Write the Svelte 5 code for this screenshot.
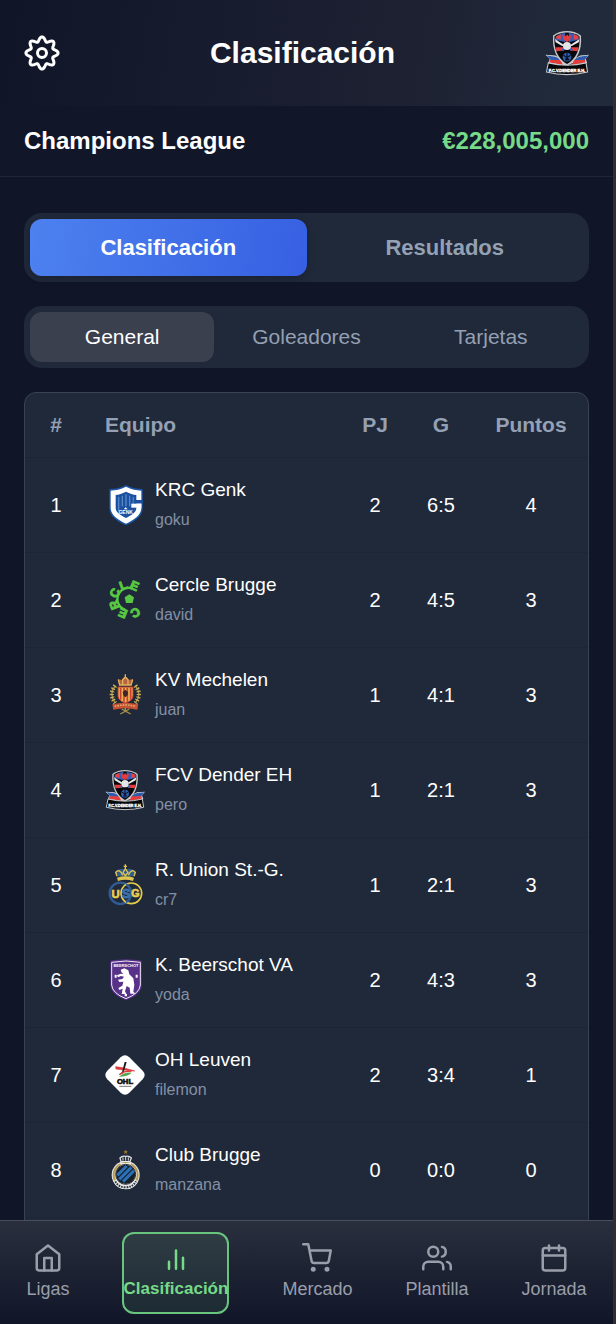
<script>
  const teams = [
    { crest: 'genk', name: 'KRC Genk', user: 'goku', played: 2, goals: '6:5', points: 4 },
    { crest: 'cercle', name: 'Cercle Brugge', user: 'david', played: 2, goals: '4:5', points: 3 },
    { crest: 'mechelen', name: 'KV Mechelen', user: 'juan', played: 1, goals: '4:1', points: 3 },
    { crest: 'dender', name: 'FCV Dender EH', user: 'pero', played: 1, goals: '2:1', points: 3 },
    { crest: 'union', name: 'R. Union St.-G.', user: 'cr7', played: 1, goals: '2:1', points: 3 },
    { crest: 'beerschot', name: 'K. Beerschot VA', user: 'yoda', played: 2, goals: '4:3', points: 3 },
    { crest: 'leuven', name: 'OH Leuven', user: 'filemon', played: 2, goals: '3:4', points: 1 },
    { crest: 'brugge', name: 'Club Brugge', user: 'manzana', played: 0, goals: '0:0', points: 0 }
  ];

  const sections = ['Clasificación', 'Resultados'];
  const views = ['General', 'Goleadores', 'Tarjetas'];
  const links = [
    { id: 'home', label: 'Ligas' },
    { id: 'chart', label: 'Clasificación' },
    { id: 'cart', label: 'Mercado' },
    { id: 'users', label: 'Plantilla' },
    { id: 'calendar', label: 'Jornada' }
  ];

  let section = $state('Clasificación');
  let view = $state('General');
  let page = $state('chart');

  // Eight-lobed outline of the settings gear, in a 36-unit box.
  const gear =
    Array.from({ length: 144 }, (_, i) => {
      const a = (i * Math.PI) / 72;
      const r = 13.9 + 2.2 * Math.cos(8 * a);
      return `${i ? 'L' : 'M'}${(18 + r * Math.cos(a)).toFixed(2)} ${(18 + r * Math.sin(a)).toFixed(2)}`;
    }).join('') + 'Z';

  const ringLetters = [
    ['C', 62], ['E', 112], ['R', 158], ['C', 205], ['L', 250], ['E', 294]
  ];
</script>

{#snippet crest(id)}
  <svg class="crest" viewBox="0 0 120 120" aria-hidden="true">
    {#if id === 'genk'}
      <path d="M63 0C80 9 97 12 113 12V70C113 94 90 110 63 121C36 110 13 94 13 70V12C29 12 46 9 63 0Z" fill="#1c55a5" />
      <path d="M63 5C79 13 94 16 109 17V70C109 89 88 105 63 116C38 105 17 89 17 70V17C32 16 47 13 63 5Z" fill="#fff" />
      <path d="M63 20C75 26 84 29 94 30V70C94 81 80 91 63 99C46 91 32 81 32 70V30C42 29 51 26 63 20Z" fill="#1b51a0" />
      <path d="M41 36V78M52 32V64M63 28V64M74 32V64M85 36V58" stroke="#5587c5" stroke-width="4" />
      <path d="M86 45H113V56H86Z" fill="#1b51a0" />
      <path d="M79 56H109V68H79Z" fill="#fff" />
      <path d="M56 73L62 67L68 73Z" fill="#fff" />
      <text x="62" y="86" class="ct" font-size="15" fill="#fff">GENK</text>
    {:else if id === 'cercle'}
      <path d="M62 90A34 34 0 0 1 42 40A34 34 0 0 1 82 25" fill="none" stroke="#58c843" stroke-width="7" />
      {#each ringLetters as [letter, angle]}
        <text transform="translate(70 58) rotate({angle + 90})" y="-32" class="ct" font-size="37" fill="#58c843" stroke="#58c843" stroke-width="3">{letter}</text>
      {/each}
      <path d="M73 43L87 52L83 69H63L59 52Z" fill="#58c843" />
    {:else if id === 'mechelen'}
      <path d="M43 30L39 12L50 15L61 3L72 15L84 12L80 30Z" fill="#b86442" />
      <path d="M44 30L40 14M78 30L83 14M53 28V14L61 6L69 14V28M61 -2V8M42 30H80" stroke="#e0b45c" stroke-width="4" fill="none" />
      <path d="M39 36H84V63Q84 77 61 84Q39 77 39 63Z" fill="#e6b453" stroke="#b83a2c" stroke-width="3" />
      <path d="M47 38V74M57 38V80M67 38V80M77 38V74" stroke="#c94231" stroke-width="5" />
      <path d="M61 44L53 51L55 61L61 67L68 61L69 51Z" fill="#43242b" />
      <path d="M31 32Q10 57 31 84M91 32Q112 57 91 84" fill="none" stroke="#a99048" stroke-width="4" />
      <path d="M31 32Q10 57 31 84M91 32Q112 57 91 84" fill="none" stroke="#c7ac59" stroke-width="13" stroke-dasharray="4 5" />
      <path d="M22 88Q61 78 100 88L97 104Q61 95 25 104Z" fill="#c65335" />
      <path d="M29 94Q61 86 93 94" fill="none" stroke="#e3b572" stroke-width="4" stroke-dasharray="5 3" />
      <path d="M46 117L73 102M50 102L77 117M61 98V112" stroke="#a99048" stroke-width="4" />
    {:else if id === 'dender'}
      <path d="M1 65L28 67L63 85L96 67L120 65L111 76L115 87L74 88L52 96L9 87L13 76Z" fill="#d3d8df" />
      <path d="M5 67L28 70L55 82L16 80Z" fill="#315bad" />
      <path d="M117 67L94 70L69 82L108 80Z" fill="#315bad" />
      <path d="M13 79L43 79L49 93L12 86ZM109 79L79 79L73 93L111 86Z" fill="#e43c3b" />
      <path d="M60 0Q81 0 98 12Q103 71 60 95Q18 71 22 12Q39 0 60 0Z" fill="#c8c8ca" />
      <path d="M60 4Q80 4 94 14Q98 67 60 90Q22 67 26 14Q40 4 60 4Z" fill="#07080b" />
      <path d="M29 15Q43 6 55 5L56 31L28 24ZM65 5Q82 7 92 15L91 24L65 31Z" fill="#335fbc" />
      <path d="M31 14L43 9V24L30 20ZM79 9L91 14V22L79 24Z" fill="#ec413e" />
      <path d="M47 10L57 14L60 9L65 14L72 11L69 24L60 31L51 24Z" fill="#e43b3e" />
      <path d="M28 27L47 36L55 44L48 46L29 38ZM92 27L73 36L65 44L72 46L91 38Z" fill="#07080b" />
      <path d="M27 22L55 40L47 41L29 31ZM94 22L66 40L73 41L92 31Z" fill="#e8e9eb" />
      <path d="M29 44L49 44L52 53L31 55ZM91 44L71 44L68 53L89 55Z" fill="#e43d3c" />
      <path d="M47 53L54 46H67L74 53" stroke="#335fbc" stroke-width="6" fill="none" />
      <circle cx="60" cy="41" r="11" fill="#e3e5e8" />
      <circle cx="60" cy="71" r="12" fill="#315dae" />
      <path d="M60 60V82M50 66L60 72L70 66M55 80L60 72L66 80" stroke="#091122" stroke-width="3" fill="none" />
      <path d="M9 87Q60 100 112 87L116 112Q60 126 4 112Z" fill="#050608" stroke="#c6c7c9" stroke-width="3" />
      <text x="60" y="111" class="ct" font-size="11" fill="#fff" stroke="#fff" stroke-width="1">F.C.V.DENDER E.H.</text>
    {:else if id === 'union'}
      <path d="M36 34L31 20Q43 7 61 13Q79 7 92 20L87 34Z" fill="#315b91" />
      <path d="M61 -2V12M56 4H66M36 34L32 22Q43 9 53 31M87 34L91 22Q80 9 70 31M61 11L54 23L61 32L69 23Z" fill="none" stroke="#ddc650" stroke-width="4" />
      <path d="M36 38Q61 30 87 38L84 48Q61 41 39 48Z" fill="#ddc650" />
      <circle cx="46" cy="85" r="32" fill="none" stroke="#315b91" stroke-width="7" />
      <circle cx="79" cy="85" r="31" fill="none" stroke="#e1cc4a" stroke-width="5" />
      <path d="M63 57A32 32 0 0 1 63 112" fill="none" stroke="#315b91" stroke-width="6" />
      <text x="32" y="98" class="ct" font-size="34" fill="#e6d155" stroke="#e6d155" stroke-width="2">U</text>
      <text x="63" y="99" class="ct" font-size="38" fill="#3c70ab" stroke="#3c70ab" stroke-width="3">S</text>
      <text x="91" y="97" class="ct" font-size="32" fill="#e6d155" stroke="#e6d155" stroke-width="2">G</text>
    {:else if id === 'beerschot'}
      <path d="M16 2Q63 -7 110 2V76Q108 105 63 121Q18 105 16 76Z" fill="#57318a" />
      <path d="M20 7Q63 -1 106 7V75Q104 100 63 116Q22 100 20 75Z" fill="#57318a" stroke="#eee9f3" stroke-width="3" />
      <text x="63" y="21" class="ct" font-size="12" fill="#fff">BEERSCHOT</text>
      <path d="M47 29L58 25L70 31L73 43L85 55L88 75L85 95L91 101H76L74 83L65 78L60 94L64 102H50L53 86L43 90L40 84L52 77L55 65L43 66L39 59L52 57L57 50L48 48L39 52L36 46L47 41L55 42L49 36Z" fill="#fff" />
      <path d="M29 44H35V53H29ZM92 44H98V53H92ZM59 102H66V109H59Z" fill="#fff" />
    {:else if id === 'leuven'}
      <path d="M47 7Q60 -5 73 7L113 47Q125 60 113 73L73 113Q60 125 47 113L7 73Q-5 60 7 47Z" fill="#fff" />
      <path d="M32 35Q57 37 89 48Q65 46 33 42Z" fill="#df363b" stroke="#df363b" stroke-width="2" />
      <path d="M65 21L59 21L51 52L43 58L55 55Z" fill="#171819" />
      <path d="M43 59Q55 48 80 48" fill="none" stroke="#df363b" stroke-width="4" />
      <path d="M42 65Q60 50 80 53Q69 65 42 65Z" fill="#55a84f" />
      <text x="60" y="88" class="ct" font-size="23" fill="#111" stroke="#111" stroke-width="2">OHL</text>
      <path d="M43 94H79" stroke="#777" stroke-width="3" />
    {:else}
      <path d="M62 -1L64 4H69L65 7L67 12L62 9L57 12L59 7L55 4H60Z" fill="#a87a2c" />
      <path d="M48 35L45 24Q51 17 62 19Q73 17 79 24L75 35Z" fill="#232a35" stroke="#dce0e3" stroke-width="4" />
      <path d="M54 22V32M62 18V32M70 22V32" stroke="#dce0e3" stroke-width="3" />
      <circle cx="62" cy="75" r="42" fill="#e9eaeb" />
      <circle cx="62" cy="75" r="36" fill="none" stroke="#b89b53" stroke-width="6" />
      <path d="M45 39H79L76 46H48Z" fill="#e9eaeb" />
      <path d="M30 91Q39 112 62 112Q84 112 94 91" fill="none" stroke="#e9eaeb" stroke-width="12" />
      <path d="M31 94Q40 112 62 112Q83 112 93 94" fill="none" stroke="#30363e" stroke-width="6" stroke-dasharray="5 3" />
      <circle cx="62" cy="73" r="29" fill="#1a2028" />
      <path d="M37 76L65 48M43 88L79 52M54 95L87 62" stroke="#2a70b8" stroke-width="9" />
      <circle cx="62" cy="73" r="30" fill="none" stroke="#232b33" stroke-width="3" />
    {/if}
  </svg>
{/snippet}

{#snippet icon(id)}
  <svg class="icon" viewBox="0 0 24 24" aria-hidden="true">
    {#if id === 'home'}
      <path d="M3 9l9-7 9 7v11a2 2 0 0 1-2 2H5a2 2 0 0 1-2-2z" />
      <path d="M9 22V12h6v10" />
    {:else if id === 'chart'}
      <path d="M17.6 20.6V11.8M12 20.6V6M6.4 20.6v-5.6" />
    {:else if id === 'cart'}
      <circle cx="9" cy="21" r="1" />
      <circle cx="20" cy="21" r="1" />
      <path d="M1 1h4l2.68 13.39a2 2 0 0 0 2 1.61h9.72a2 2 0 0 0 2-1.61L23 6H6" />
    {:else if id === 'users'}
      <path d="M17 21v-2a4 4 0 0 0-4-4H5a4 4 0 0 0-4 4v2" />
      <circle cx="9" cy="7" r="4" />
      <path d="M23 21v-2a4 4 0 0 0-3-3.87M16 3.13a4 4 0 0 1 0 7.75" />
    {:else}
      <rect x="3" y="4" width="18" height="18" rx="2" />
      <path d="M16 2v4M8 2v4M3 10h18" />
    {/if}
  </svg>
{/snippet}

<div class="app">
  <header class="top">
    <button class="plain" aria-label="Ajustes">
      <svg class="gear" viewBox="0 0 36 36" aria-hidden="true">
        <path d={gear} />
        <circle cx="18" cy="18" r="4.5" />
      </svg>
    </button>
    <h1>Clasificación</h1>
    <button class="plain badge" aria-label="Mi equipo">{@render crest('dender')}</button>
  </header>

  <div class="league">
    <h2>Champions League</h2>
    <span class="money">€228,005,000</span>
  </div>

  <main>
    <div class="tabs primary">
      {#each sections as name}
        <button class:on={section === name} aria-pressed={section === name} onclick={() => (section = name)}>{name}</button>
      {/each}
    </div>
    <div class="tabs secondary">
      {#each views as name}
        <button class:on={view === name} aria-pressed={view === name} onclick={() => (view = name)}>{name}</button>
      {/each}
    </div>

    <div class="card">
      <table>
        <thead>
          <tr>
            <th class="rank">#</th>
            <th class="team">Equipo</th>
            <th class="num">PJ</th>
            <th class="num">G</th>
            <th class="points">Puntos</th>
          </tr>
        </thead>
        <tbody>
          {#each teams as team, i}
            <tr>
              <td>{i + 1}</td>
              <td class="team">
                <div class="club">
                  {@render crest(team.crest)}
                  <div class="names">
                    <span class="name">{team.name}</span>
                    <span class="user">{team.user}</span>
                  </div>
                </div>
              </td>
              <td>{team.played}</td>
              <td>{team.goals}</td>
              <td>{team.points}</td>
            </tr>
          {/each}
        </tbody>
      </table>
    </div>
  </main>

  <nav>
    {#each links as link}
      <button class="link" class:on={page === link.id} onclick={() => (page = link.id)}>
        {@render icon(link.id)}
        <span>{link.label}</span>
      </button>
    {/each}
  </nav>
</div>

<style>
  :global(body) {
    background: #101528;
  }
  .app {
    box-sizing: border-box;
    height: 100vh;
    display: flex;
    flex-direction: column;
    border-right: 3px solid #302f2f;
    background: #101528;
    color: #fff;
    font-family: 'Liberation Sans', Arial, sans-serif;
  }
  button {
    font: inherit;
    color: inherit;
    background: none;
    border: 0;
    padding: 0;
    cursor: pointer;
  }
  .plain {
    display: flex;
  }
  h1,
  h2 {
    margin: 0;
    font-weight: 700;
  }
  .top {
    flex: none;
    display: flex;
    align-items: center;
    justify-content: space-between;
    padding: 31px 24px;
    background: linear-gradient(100deg, #101528, #1e2233 70%, #202a3a 90%);
  }
  h1 {
    font-size: 30px;
    line-height: 44px;
  }
  .gear {
    width: 36px;
    height: 36px;
    fill: none;
    stroke: #fff;
    stroke-width: 3;
    stroke-linejoin: round;
  }
  .crest {
    display: block;
    flex: none;
    width: 40px;
    height: 40px;
    overflow: visible;
  }
  .badge .crest {
    width: 44px;
    height: 44px;
  }
  .ct {
    font-family: 'Liberation Sans', Arial, sans-serif;
    font-weight: 700;
    text-anchor: middle;
  }
  .league {
    flex: none;
    display: flex;
    align-items: center;
    justify-content: space-between;
    padding: 21px 24px;
    border-bottom: 1px solid #1d2536;
    background: #111629;
    font-size: 24px;
    line-height: 28px;
  }
  h2 {
    font-size: 24px;
  }
  .money {
    color: #76da88;
    font-weight: 700;
  }
  main {
    flex: 1;
    min-height: 0;
    overflow-y: auto;
    scrollbar-width: none;
    display: flex;
    flex-direction: column;
    gap: 24px;
    padding: 36px 24px 0;
  }
  .tabs {
    flex: none;
    display: flex;
    padding: 6px;
    border-radius: 18px;
    background: #202939;
    color: #94a0b4;
  }
  .tabs button {
    flex: 1 1 0;
    border-radius: 12px;
  }
  .primary button {
    padding: 16px 0;
    font-size: 22px;
    line-height: 25px;
    font-weight: 700;
  }
  .primary .on {
    background: linear-gradient(100deg, #4d81ef, #3660e2);
    box-shadow: 0 2px 6px rgba(16, 21, 40, 0.4);
    color: #fff;
  }
  .secondary button {
    padding: 13px 0;
    font-size: 21px;
    line-height: 24px;
  }
  .secondary .on {
    background: #3b404f;
    color: #fff;
  }
  .card {
    flex: none;
    padding-bottom: 24px;
    border: 1px solid #384253;
    border-radius: 12px;
    background: #202939;
  }
  table {
    width: 100%;
    table-layout: fixed;
    border-collapse: collapse;
    font-size: 20px;
    line-height: 24px;
    text-align: center;
  }
  th,
  td {
    padding: 0;
    border-bottom: 1px solid #1d2535;
  }
  th {
    height: 64px;
    font-size: 21px;
    color: #94a0b4;
  }
  td {
    height: 94px;
  }
  .rank {
    width: 62px;
  }
  .num {
    width: 66px;
  }
  .points {
    width: 114px;
  }
  .team {
    padding-left: 18px;
    text-align: left;
  }
  .club {
    display: flex;
    align-items: center;
    gap: 10px;
  }
  .names {
    display: flex;
    flex-direction: column;
    gap: 6px;
  }
  .name {
    font-size: 19px;
    line-height: 24px;
  }
  .user {
    color: #8390a5;
    font-size: 16px;
    line-height: 24px;
  }
  nav {
    flex: none;
    display: flex;
    justify-content: space-around;
    padding: 11px 0 10px;
    border-top: 1px solid #494e5d;
    background: linear-gradient(#2a2f3e, #101528);
    color: #9a9eaa;
  }
  .link {
    display: flex;
    flex-direction: column;
    align-items: center;
    gap: 5px;
    padding: 9px 0 12px;
    border: 2px solid transparent;
    border-width: 2px 0;
    font-size: 18px;
    line-height: 22px;
  }
  .link.on {
    box-sizing: border-box;
    width: 107px;
    border: 2px solid #69c57d;
    border-radius: 12px;
    background: linear-gradient(#2f3c44, #1d2b34);
    color: #76da88;
    font-size: 17px;
    font-weight: 700;
  }
  .icon {
    width: 30px;
    height: 30px;
    fill: none;
    stroke: currentColor;
    stroke-width: 2;
    stroke-linecap: round;
    stroke-linejoin: round;
  }
</style>
